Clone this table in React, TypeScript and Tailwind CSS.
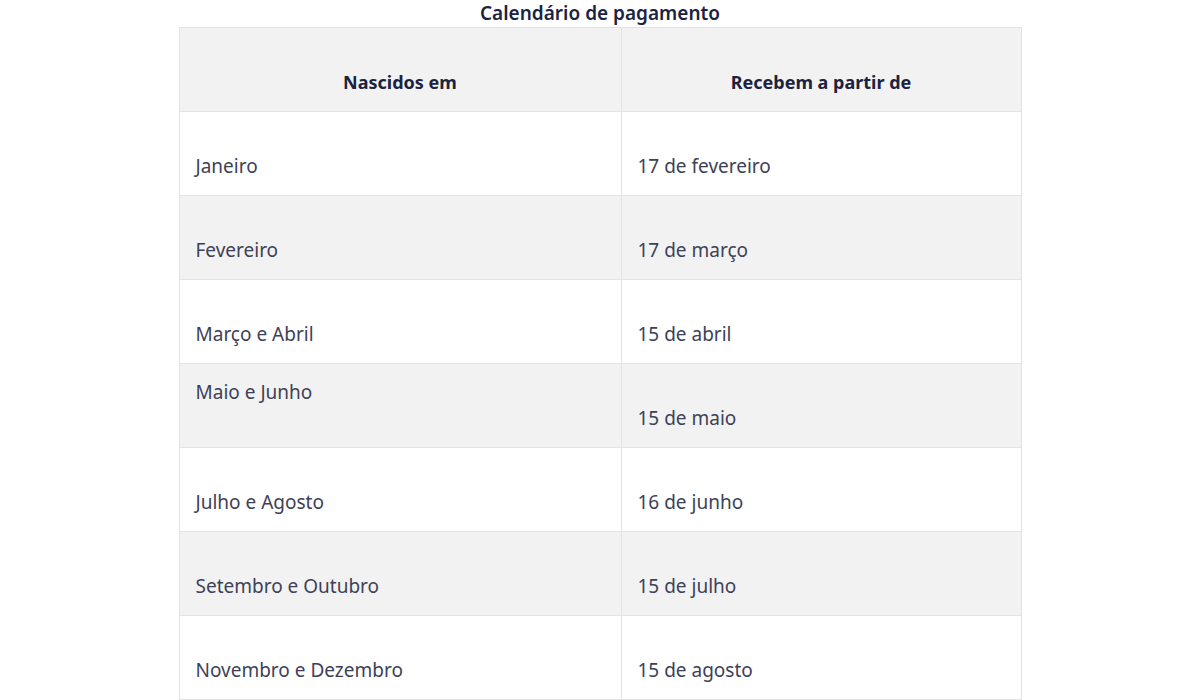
import React from "react";

const rows: { a: string; b: string; aTop?: boolean }[] = [
  { a: "Janeiro", b: "17 de fevereiro" },
  { a: "Fevereiro", b: "17 de março" },
  { a: "Março e Abril", b: "15 de abril" },
  { a: "Maio e Junho", b: "15 de maio", aTop: true },
  { a: "Julho e Agosto", b: "16 de junho" },
  { a: "Setembro e Outubro", b: "15 de julho" },
  { a: "Novembro e Dezembro", b: "15 de agosto" },
];

function Cell({ text, top, head }: { text: string; top?: boolean; head?: boolean }) {
  return (
    <td
      className={`border border-[#e3e3e3] px-4 pt-[15px] pb-[15px] align-top leading-[26px] ${
        head ? "text-center font-bold text-[18px] text-[#1b2340]" : "text-[19px] text-[#3d4157]"
      }`}
    >
      {top ? (
        <>
          <div>{text}</div>
          <div>&nbsp;</div>
        </>
      ) : (
        <>
          <div>&nbsp;</div>
          <div>{text}</div>
        </>
      )}
    </td>
  );
}

export default function App() {
  return (
    <div
      className="w-[1200px] h-[700px] bg-white overflow-hidden flex flex-col items-center"
      style={{ fontFamily: "'Noto Sans', sans-serif" }}
    >
      <div className="h-[27px] shrink-0 flex items-center justify-center text-[19px] font-semibold text-[#1b2340] leading-none">
        Calendário de pagamento
      </div>
      <table className="w-[843px] shrink-0 border-collapse table-fixed">
        <colgroup>
          <col className="w-[442px]" />
          <col />
        </colgroup>
        <thead>
          <tr className="bg-[#f2f2f2] h-[84px]">
            <Cell text="Nascidos em" head />
            <Cell text="Recebem a partir de" head />
          </tr>
        </thead>
        <tbody>
          {rows.map((r, i) => (
            <tr key={r.a} className={`h-[84px] ${i % 2 === 1 ? "bg-[#f2f2f2]" : "bg-white"}`}>
              <Cell text={r.a} top={r.aTop} />
              <Cell text={r.b} />
            </tr>
          ))}
        </tbody>
      </table>
    </div>
  );
}
